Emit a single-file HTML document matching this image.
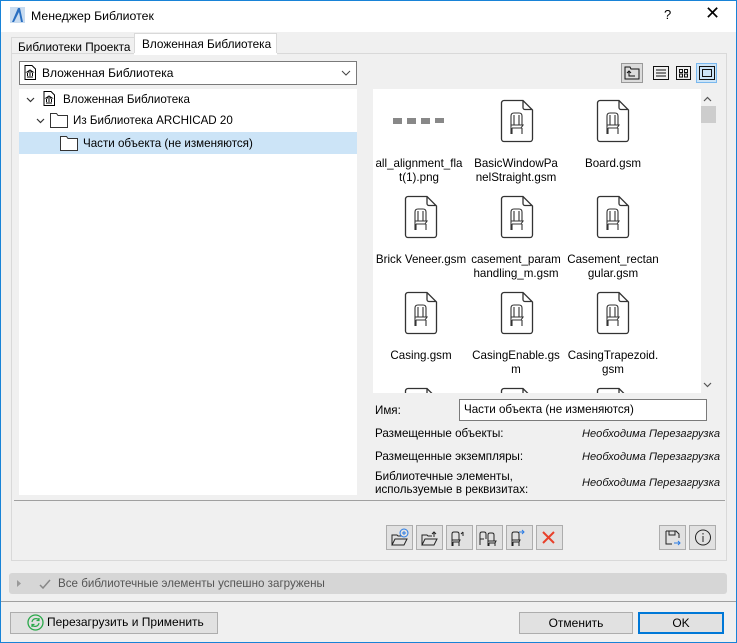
<!DOCTYPE html>
<html><head><meta charset="utf-8"><style>
*{box-sizing:border-box;margin:0;padding:0}
body{width:737px;height:643px;background:#f0f0f0;font-family:"Liberation Sans","DejaVu Sans",sans-serif;font-size:11.6px;color:#000;position:relative;overflow:hidden}
.a{position:absolute}
.win{left:0;top:0;width:737px;height:643px;border:1px solid #1883d7}
.btn{position:absolute;background:#e1e1e1;border:1px solid #adadad;text-align:center}
.ib{position:absolute;width:27px;height:25px;background:#e1e1e1;border:1px solid #adadad}
.cap{position:absolute;width:100px;text-align:center;line-height:14px;font-size:11.6px}
.doc{position:absolute;width:34px;height:44px}
.it{position:absolute;left:582px;font-style:italic;color:#111;font-size:11.1px}
</style></head><body>
<svg width="0" height="0" style="position:absolute"><defs>
<symbol id="doc" viewBox="0 0 34 44"><path d="M4 1.5h19l9.5 9.5v29a2.5 2.5 0 0 1-2.5 2.5H4A2.5 2.5 0 0 1 1.5 40V4A2.5 2.5 0 0 1 4 1.5z M23 1.5v7a2 2 0 0 0 2 2h7.5" fill="#fff" stroke="#333" stroke-width="1.3"/><path d="M11 35V17q0-3 3-3h5q3 0 3 3v9 M11 26h12l-2 3h-9 M12 29v6 M22 29v6 M14 16v10 M19 16v10" fill="none" stroke="#333" stroke-width="1.1"/></symbol>
</defs></svg>
<div class="a win"></div>
<div class="a" style="left:1px;top:1px;width:735px;height:31px;background:#fff"></div>
<svg class="a" style="left:10px;top:7px" width="15" height="16"><rect width="15" height="16" fill="#c9dcf0"/><path d="M2 15L8 1h2l3 14h-2L9 5 4 15z" fill="#2a6fc1"/></svg>
<div class="a" style="left:31px;top:9px;font-size:12.3px;color:#000">Менеджер Библиотек</div>
<div class="a" style="left:664px;top:7px;font-size:13px">?</div>
<div class="a" style="left:705px;top:3px;font-size:18px;font-weight:300">✕</div>

<div class="a" style="left:11px;top:37px;width:124px;height:17px;border:1px solid #d9d9d9;border-bottom:none;background:#f0f0f0;padding:2px 0 0 6px;font-size:11.8px">Библиотеки Проекта</div>
<div class="a" style="left:134px;top:33px;width:143px;height:21px;border:1px solid #d9d9d9;border-bottom:none;background:#fff;padding:3px 0 0 7px;font-size:11.8px">Вложенная Библиотека</div>
<div class="a" style="left:11px;top:53px;width:716px;height:508px;border:1px solid #d9d9d9;background:#f0f0f0"></div>
<div class="a" style="left:134px;top:53px;width:143px;height:2px;background:#fff"></div>

<div class="a" style="left:19px;top:61px;width:338px;height:24px;border:1px solid #7a7a7a;background:#fff"></div>
<svg class="a" style="left:24px;top:65px" width="12" height="15"><path d="M1 .5h7l3.5 3.5v10.5H1z" fill="#fff" stroke="#000"/><path d="M3 7l3-2 3 2zM3.5 8v3M6 8v3M8.5 8v3M3 12h6" stroke="#000" fill="none"/></svg>
<div class="a" style="left:42px;top:66px;font-size:12px">Вложенная Библиотека</div>
<svg class="a" style="left:341px;top:70px" width="10" height="6"><path d="M1 1l4 4 4-4" stroke="#444" fill="none"/></svg>

<div class="a" style="left:19px;top:89px;width:338px;height:406px;background:#fff"></div>
<div class="a" style="left:19px;top:132px;width:338px;height:22px;background:#cce4f7"></div>
<svg class="a" style="left:26px;top:97px" width="9" height="6"><path d="M1 1l3.5 3.5L8 1" stroke="#333" fill="none" stroke-width="1.2"/></svg>
<svg class="a" style="left:43px;top:91px" width="12" height="15"><path d="M1 .5h7l3.5 3.5v10.5H1z" fill="#fff" stroke="#000"/><path d="M3 7l3-2 3 2zM3.5 8v3M6 8v3M8.5 8v3M3 12h6" stroke="#000" fill="none"/></svg>
<div class="a" style="left:63px;top:93px">Вложенная Библиотека</div>
<svg class="a" style="left:36px;top:118px" width="9" height="6"><path d="M1 1l3.5 3.5L8 1" stroke="#333" fill="none" stroke-width="1.2"/></svg>
<svg class="a" style="left:50px;top:113px" width="18" height="15"><path d="M.5 .5h6l1.5 2h9.5v12H.5z" fill="#fff" stroke="#333"/></svg>
<div class="a" style="left:73px;top:114px">Из Библиотека ARCHICAD 20</div>
<svg class="a" style="left:60px;top:136px" width="18" height="15"><path d="M.5 .5h6l1.5 2h9.5v12H.5z" fill="#fff" stroke="#333"/></svg>
<div class="a" style="left:83px;top:137px">Части объекта (не изменяются)</div>

<div class="a" style="left:621px;top:63px;width:22px;height:20px;border:1px solid #999;background:#dcdcdc"></div>
<svg class="a" style="left:624px;top:66px" width="16" height="14"><path d="M1 1h5l1 2h8v10H1z M5 10V5M3 7l2-2 2 2M5 5v5h6" fill="none" stroke="#111"/></svg>
<svg class="a" style="left:653px;top:66px" width="16" height="14"><rect x=".5" y=".5" width="15" height="13" fill="none" stroke="#111"/><path d="M3 4h10M3 7h10M3 10h10" stroke="#111"/></svg>
<svg class="a" style="left:676px;top:66px" width="15" height="14"><rect x=".5" y=".5" width="14" height="13" fill="none" stroke="#111"/><rect x="3.5" y="3.5" width="3" height="3" fill="none" stroke="#111"/><rect x="8.5" y="3.5" width="3" height="3" fill="none" stroke="#111"/><rect x="3.5" y="8" width="3" height="3" fill="none" stroke="#111"/><rect x="8.5" y="8" width="3" height="3" fill="none" stroke="#111"/></svg>
<div class="a" style="left:696px;top:63px;width:21px;height:20px;border:1px solid #7ab8ee;background:#cce4f7"></div>
<svg class="a" style="left:699px;top:66px" width="16" height="14"><rect x=".5" y=".5" width="15" height="13" fill="none" stroke="#111"/><rect x="3.5" y="3.5" width="9" height="7" fill="none" stroke="#111"/></svg>

<div class="a" style="left:373px;top:89px;width:328px;height:304px;background:#fff;overflow:hidden">
 <svg class="a" style="left:20px;top:28px" width="60" height="8"><g fill="#888"><rect x="0" y="1" width="9" height="6"/><rect x="14" y="1" width="9" height="6"/><rect x="28" y="1" width="9" height="6"/><rect x="42" y="1" width="9" height="5"/></g></svg>
 <svg class="doc" style="left:127px;top:10px"><use href="#doc"/></svg>
 <svg class="doc" style="left:223px;top:10px"><use href="#doc"/></svg>
 <div class="cap" style="left:-4px;top:68px">all_alignment_fla<br>t(1).png</div>
 <div class="cap" style="left:93px;top:68px">BasicWindowPa<br>nelStraight.gsm</div>
 <div class="cap" style="left:190px;top:68px">Board.gsm</div>
 <svg class="doc" style="left:31px;top:106px"><use href="#doc"/></svg>
 <svg class="doc" style="left:127px;top:106px"><use href="#doc"/></svg>
 <svg class="doc" style="left:223px;top:106px"><use href="#doc"/></svg>
 <div class="cap" style="left:-2px;top:164px">Brick Veneer.gsm</div>
 <div class="cap" style="left:93px;top:164px">casement_param<br>handling_m.gsm</div>
 <div class="cap" style="left:190px;top:164px">Casement_rectan<br>gular.gsm</div>
 <svg class="doc" style="left:31px;top:202px"><use href="#doc"/></svg>
 <svg class="doc" style="left:127px;top:202px"><use href="#doc"/></svg>
 <svg class="doc" style="left:223px;top:202px"><use href="#doc"/></svg>
 <div class="cap" style="left:-2px;top:260px">Casing.gsm</div>
 <div class="cap" style="left:93px;top:260px">CasingEnable.gs<br>m</div>
 <div class="cap" style="left:190px;top:260px">CasingTrapezoid.<br>gsm</div>
 <svg class="doc" style="left:31px;top:298px"><use href="#doc"/></svg>
 <svg class="doc" style="left:127px;top:298px"><use href="#doc"/></svg>
 <svg class="doc" style="left:223px;top:298px"><use href="#doc"/></svg>
</div>
<svg class="a" style="left:703px;top:96px" width="9" height="6"><path d="M1 5l3.5-3.5L8 5" stroke="#555" fill="none" stroke-width="1.2"/></svg>
<div class="a" style="left:701px;top:106px;width:15px;height:17px;background:#cdcdcd"></div>
<svg class="a" style="left:703px;top:382px" width="9" height="6"><path d="M1 1l3.5 3.5L8 1" stroke="#555" fill="none" stroke-width="1.2"/></svg>

<div class="a" style="left:375px;top:404px">Имя:</div>
<div class="a" style="left:459px;top:399px;width:248px;height:22px;border:1px solid #7a7a7a;background:#fff;padding:3px 0 0 4px">Части объекта (не изменяются)</div>
<div class="a" style="left:375px;top:427px">Размещенные объекты:</div>
<div class="a" style="left:375px;top:450px">Размещенные экземпляры:</div>
<div class="a" style="left:375px;top:470px;line-height:13px">Библиотечные элементы,<br>используемые в реквизитах:</div>
<div class="it" style="top:428px">Необходима Перезагрузка</div>
<div class="it" style="top:451px">Необходима Перезагрузка</div>
<div class="it" style="top:477px">Необходима Перезагрузка</div>

<div class="a" style="left:14px;top:500px;width:711px;height:1px;background:#a0a0a0"></div>

<div class="ib" style="left:386px;top:525px"></div>
<div class="ib" style="left:416px;top:525px"></div>
<div class="ib" style="left:446px;top:525px"></div>
<div class="ib" style="left:476px;top:525px"></div>
<div class="ib" style="left:506px;top:525px"></div>
<div class="ib" style="left:536px;top:525px"></div>
<div class="ib" style="left:659px;top:525px"></div>
<div class="ib" style="left:689px;top:525px"></div>
<svg class="a" style="left:386px;top:525px" width="180" height="25" fill="none" stroke="#222">
 <path d="M6 20V10h5l1 1h4M6 20l3-6h12l-3 6z"/><circle cx="18" cy="8" r="4" stroke="#2a7be4"/><path d="M18 6v4M16 8h4" stroke="#2a7be4"/>
 <path d="M36 20V10h5l1 1h4M36 20l3-6h12l-3 6zM46 9l2-2 2 2M48 7v5"/>
 <path d="M66 21v-12q0-2 2-2h3q2 0 2 2v6M66 15h8l-1 2h-6M67 17v4M73 17v4M75 9l2-2M77 7v4"/>
 <path d="M94 20V9q0-2 2-2h2q2 0 2 2v5M94 14h4M102 21V10q0-2 2-2h2q2 0 2 2v6M102 16h8l-1 2h-6M103 18v3M109 18v3"/>
 <path d="M126 21v-12q0-2 2-2h3q2 0 2 2v6M126 15h8l-1 2h-6M127 17v4M133 17v4"/><path d="M133 7h5M136 5l2 2-2 2" stroke="#2a7be4"/>
 <path d="M157 7l11 11M168 7l-11 11" stroke="#e8402a" stroke-width="2"/>
</svg>
<svg class="a" style="left:659px;top:525px" width="60" height="25" fill="none" stroke="#222">
 <path d="M7 6h10l3 3v4M7 6v13h6M10 6v4h6V6"/><path d="M15 18h6M19 16l2 2-2 2" stroke="#2a7be4"/>
 <circle cx="44" cy="12.5" r="7.5"/><path d="M44 11v6M44 8v1.5"/>
</svg>

<div class="a" style="left:9px;top:573px;width:718px;height:21px;background:#d6d6d6;border-radius:3px"></div>
<svg class="a" style="left:17px;top:580px" width="5" height="7"><path d="M0 0l4 3.5L0 7z" fill="#999"/></svg>
<svg class="a" style="left:39px;top:579px" width="12" height="10"><path d="M1 6l3 3 7-8" stroke="#888" stroke-width="1.5" fill="none"/></svg>
<div class="a" style="left:58px;top:577px;color:#555">Все библиотечные элементы успешно загружены</div>
<div class="a" style="left:1px;top:601px;width:735px;height:1px;background:#a0a0a0"></div>

<div class="btn" style="left:10px;top:612px;width:208px;height:22px"></div>
<svg class="a" style="left:27px;top:614px" width="17" height="17"><circle cx="8.5" cy="8.5" r="7.5" fill="none" stroke="#2aa84a" stroke-width="1.3"/><path d="M5 8a4 4 0 0 1 7-2M12 9a4 4 0 0 1-7 2M12 4v2.5h-2.5M5 13v-2.5h2.5" fill="none" stroke="#2aa84a" stroke-width="1.2"/></svg>
<div class="a" style="left:47px;top:615px;font-size:12px">Перезагрузить и Применить</div>
<div class="btn" style="left:519px;top:612px;width:114px;height:22px;padding-top:3px;font-size:12px">Отменить</div>
<div class="btn" style="left:638px;top:612px;width:86px;height:22px;border:2px solid #0078d7;padding-top:2px;font-size:12px">OK</div>
</body></html>
